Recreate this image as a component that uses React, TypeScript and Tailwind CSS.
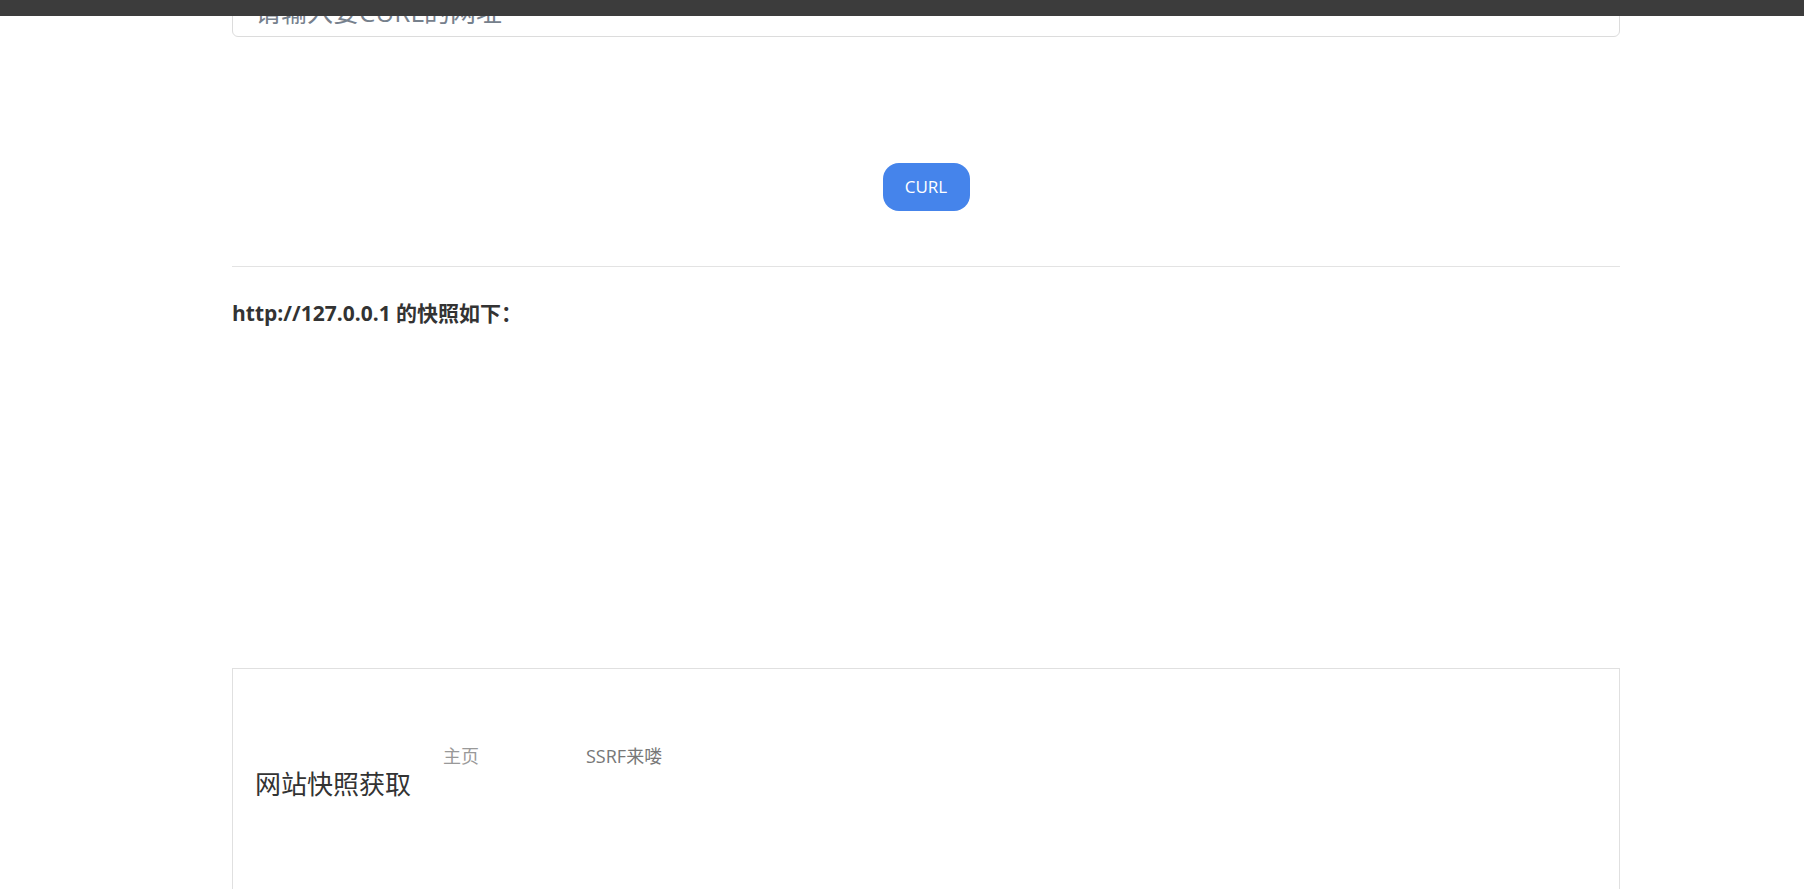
const sans = "font-['Open_Sans','Noto_Sans_CJK_SC',sans-serif]";

const App = () => {
  return (
    <div className={`relative w-full h-[889px] overflow-hidden bg-white ${sans}`}>
      {/* dark strip over the top */}
      <div className="absolute top-0 left-0 right-0 h-4 bg-[#3c3c3c] z-10"></div>

      <div className="ml-[232px] w-[1388px] flex flex-col">
        <input
          className="mt-[-15px] h-[52px] w-full border border-[#dcdcdc] rounded-[6px] px-[22px] pt-[2px] text-[26px] text-[#555] placeholder:text-[#76808c] outline-none"
          placeholder="请输入要CURL的网址"
        />

        <button className="mt-[126px] self-center w-[87px] h-[48px] rounded-[16px] bg-[#4584eb] text-white text-[17px]">
          CURL
        </button>

        <div className="mt-[55px] border-t border-[#e3e3e3]"></div>

        <h3 className="mt-[32px] text-[21px] leading-[28px] font-bold text-[#333]">
          http://127.0.0.1 的快照如下：
        </h3>

        {/* snapshot frame */}
        <div className="mt-[341px] h-[300px] border border-[#e0e0e0]">
          <div className="flex items-start pt-[75px] pl-[22px]">
            <div className="w-[188px] mt-[27px] text-[26px] leading-[30px] text-[#333] font-['Liberation_Serif','Noto_Sans_CJK_SC',serif]">
              网站快照获取
            </div>
            <a className="w-[143px] text-[18px] leading-[24px] text-[#999]">主页</a>
            <a className="text-[18px] leading-[24px] text-[#777]">SSRF来喽</a>
          </div>
        </div>
      </div>
    </div>
  );
};

export default App;
